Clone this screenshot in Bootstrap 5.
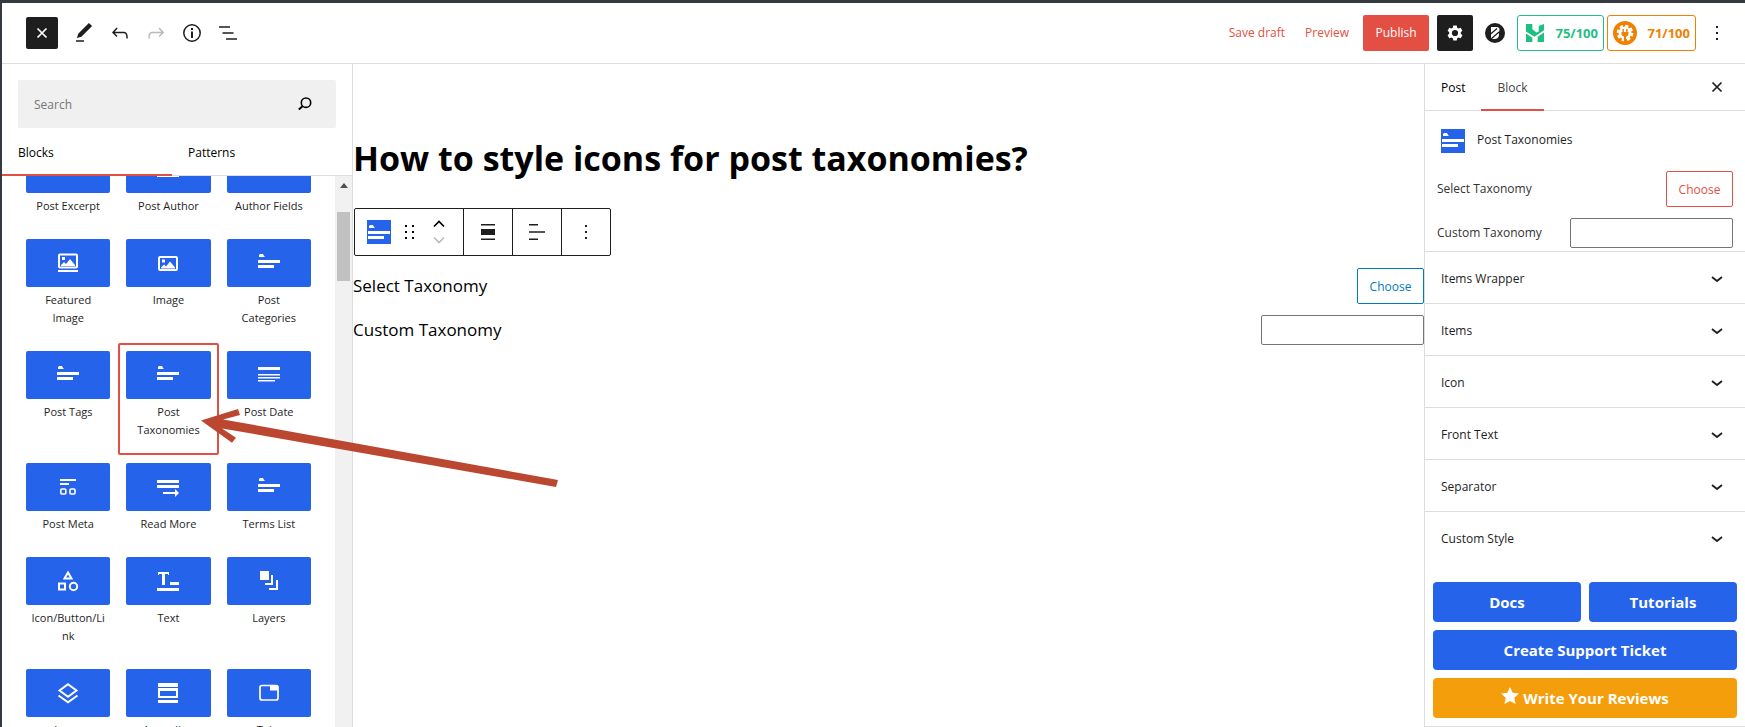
<!DOCTYPE html>
<html lang="en">
<head>
<meta charset="utf-8">
<meta name="viewport" content="width=device-width, initial-scale=1">
<title>Edit Post</title>
<link href="https://cdn.jsdelivr.net/npm/bootstrap@5.3.0/dist/css/bootstrap.min.css" rel="stylesheet">
<style>
:root { --line: #ddd; --ink: #1e1e1e; --accent: #e34f43; --tile: #2563eb; }
body { font-family: "Open Sans", "Noto Sans", sans-serif; font-size: 12px; line-height: 18px; color: var(--ink); background: #fff; }
button { font-family: inherit; }
.editor { height: 100vh; border-top: 3px solid #343a40; border-left: 2px solid #343a40; }
.topbar { height: 61px; border-bottom: 1px solid var(--line); padding: 0 10px 0 24px; }
.tool { width: 36px; height: 36px; border: 0; background: none; padding: 0; display: flex; align-items: center; justify-content: center; color: var(--ink); }
.tool-close { width: 32px; height: 32px; background: var(--ink); color: #fff; border-radius: 2px; }
.tool-gear { background: var(--ink); color: #fff; border-radius: 2px; }
.tool:disabled { opacity: .3; }
.txt-btn { border: 0; background: none; color: var(--accent); height: 36px; padding: 0 10px; }
.btn-publish { background: var(--accent); color: #fff; height: 36px; width: 66px; border: 0; border-radius: 2px; padding: 0; }
.scores { gap: 3px; margin-right: 3px; }
.score { height: 36px; border: 1px solid; border-radius: 3px; background: #fff; font-weight: 700; font-size: 13px; padding: 0 5px; white-space: nowrap; }
.score-green { color: #1fbf84; width: 87px; }
.score-orange { color: #f08000; width: 89px; }
.work-area { min-height: 0; }
.inserter { width: 351px; border-right: 1px solid var(--line); flex: none; }
.search-box { margin: 16px 16px 0; height: 48px; background: #f0f0f0; border-radius: 2px; padding: 0 24px 0 16px; }
.search-box input { border: 0; background: none; outline: 0; font-size: 12px; color: var(--ink); padding: 2px 0 0; }
.search-box input::placeholder { color: #757575; opacity: 1; }
.ins-tabs { height: 48px; border-bottom: 1px solid var(--line); padding-right: 10px; }
.ins-tabs button { border: 0; background: none; width: 50%; height: 48px; text-align: left; padding: 2px 16px 0; font-weight: 500; }
.ins-tabs button.active { border-bottom: 2px solid var(--accent); padding-top: 4px; }
.scroll-area { min-height: 0; overflow: hidden; }
.tiles { display: grid; grid-template-columns: repeat(3, 1fr); align-items: stretch; align-content: start; flex: 1; padding: 0 16px; margin-top: -39px; }
.tile { border: 0; background: none; padding: 8px; font-size: 11px; line-height: 18px; color: var(--ink); border-radius: 2px; display: flex; flex-direction: column; }
.tile.active { box-shadow: inset 0 0 0 2px var(--accent); }
.tile-pic { height: 48px; width: 100%; background: var(--tile); color: #fff; border-radius: 2px; display: flex; align-items: center; justify-content: center; }
.tile-name { padding: 4px 4px 8px; width: 100%; overflow-wrap: anywhere; }
.scrollbar-col { width: 17px; background: #f1f1f1; flex: none; padding: 7px 2px 0; }
.scrollbar-thumb { height: 69px; background: #c1c1c1; margin-top: 24px; }
.canvas { min-width: 0; color: #000; padding-top: 68px; }
.canvas h1 { font-size: 34px; line-height: 52px; font-weight: 700; margin: 0 0 24px; }
.block-bar { height: 48px; border: 1px solid var(--ink); border-radius: 2px; margin: 0 0 12px 1px; }
.block-bar > div, .block-bar > button { border: 0; background: none; padding: 0; height: 46px; width: 49px; display: flex; align-items: center; justify-content: center; color: var(--ink); }
.block-bar > * + * { border-left: 1px solid var(--ink) !important; }
.block-bar > div.bar-first { width: 108px; justify-content: flex-start; padding-left: 12px; gap: 14px; }
.bar-first button { border: 0; background: none; padding: 0; display: flex; }
.field-row { min-height: 36px; }
.canvas .field-row { font-size: 17px; line-height: 24px; }
.field-row + .field-row { margin-top: 8px; }
.btn-choose { height: 36px; width: 67px; border: 1px solid; border-radius: 2px; background: #fff; font-size: 12px; padding: 2px 0 0; }
.blue { color: #007cba; }
.red { color: var(--accent); }
.tax-input { height: 30px; width: 163px; border: 1px solid #757575; border-radius: 2px; padding: 0 8px; background: #fff; font-size: 13px; }
.settings { width: 321px; border-left: 1px solid var(--line); flex: none; }
.set-tabs { height: 47px; border-bottom: 1px solid var(--line); padding-right: 10px; }
.set-tabs .tab { border: 0; background: none; height: 47px; padding: 0 16px; font-weight: 500; }
.set-tabs .tab.active { border-bottom: 2px solid var(--accent); padding-top: 2px; color: #444; }
.set-head { padding: 18px 16px; gap: 12px; font-weight: 500; line-height: 22px; }
.set-fields { padding: 0 12px; border-bottom: 1px solid var(--line); color: #333; }
.panel-row { height: 52px; border: 0; border-bottom: 1px solid var(--line); background: none; padding: 2px 16px 0; font-weight: 500; color: var(--ink); }
.panel-row:last-child { border-bottom-color: transparent; }
.help { padding: 18px 8px 8px; gap: 8px; display: grid; grid-template-columns: 1fr 1fr; border-bottom: 1px solid var(--line); }
.help a { height: 40px; border-radius: 4px; background: var(--tile); color: #fff; font-weight: 700; font-size: 15px; text-decoration: none; display: flex; align-items: center; justify-content: center; gap: 4px; }
.help .wide { grid-column: 1 / -1; }
.help .review { background: #f59e0b; }
.pointer { position: absolute; left: 198px; top: 401px; pointer-events: none; }
</style>
</head>
<body>
<svg width="0" height="0" class="position-absolute" aria-hidden="true">
  <symbol id="i-terms" viewBox="0 0 24 24"><path fill="currentColor" d="M1 9h22v3H1zM1 14h16v3H1zM2 4l1-1h3l1 2 1 1H2z"/></symbol>
  <symbol id="i-dots" viewBox="0 0 24 24"><path fill="currentColor" d="M11 5h2v2h-2zM11 11h2v2h-2zM11 17h2v2h-2z"/></symbol>
  <symbol id="i-down" viewBox="0 0 24 24"><path fill="none" stroke="currentColor" stroke-width="1.8" d="M7 10l5 4 5-4"/></symbol>
  <symbol id="i-x" viewBox="0 0 24 24"><path fill="none" stroke="currentColor" stroke-width="1.7" d="M7.5 7.5l9 9m0-9l-9 9"/></symbol>
</svg>
<div class="editor d-flex flex-column overflow-hidden position-relative">
  <header class="topbar d-flex align-items-center justify-content-between flex-shrink-0">
    <div class="d-flex align-items-center">
      <button class="tool tool-close me-2" aria-label="Close inserter"><svg width="24" height="24"><use href="#i-x"/></svg></button>
      <button class="tool" aria-label="Tools"><svg width="24" height="24" viewBox="0 0 24 24"><path fill="currentColor" d="M20.1 5.1L16.9 2 6.2 12.7l-1.3 4.4 4.5-1.3L20.1 5.1zM4 19.2h8v1.6H4z"/></svg></button>
      <button class="tool" aria-label="Undo"><svg width="24" height="24" viewBox="0 0 24 24"><path fill="currentColor" d="M18.3 11.7c-.6-.6-1.4-.9-2.3-.9H6.7l2.9-3.3-1.1-1-4.5 5L8.500 16l1-1-2.700-2.700H16c.5 0 .9.2 1.300.5 1 1 1 3.400 1 4.500v.3h1.500v-.2c0-1.500 0-4.300-1.500-5.700z"/></svg></button>
      <button class="tool" aria-label="Redo" disabled><svg width="24" height="24" viewBox="0 0 24 24"><path fill="currentColor" d="M15.600 6.500l-1.100 1 2.900 3.300H8c-.9 0-1.700.3-2.300.9-1.400 1.500-1.400 4.200-1.400 5.600v.2h1.500v-.3c0-1.100 0-3.500 1-4.500.3-.3.7-.5 1.300-.5h9.200L14.500 15l1.100 1.100 4.600-4.600-4.600-5z"/></svg></button>
      <button class="tool" aria-label="Details"><svg width="24" height="24" viewBox="0 0 24 24"><circle cx="12" cy="12" r="8.200" fill="none" stroke="currentColor" stroke-width="1.500"/><path fill="currentColor" d="M11 7h2v2h-2zM11 10.500h2V17h-2z"/></svg></button>
      <button class="tool" aria-label="List view"><svg width="24" height="24" viewBox="0 0 24 24"><path fill="currentColor" d="M3 5.200h11v1.600H3zM6.500 11.200h11v1.600h-11zM10 17.200h11v1.600H10z"/></svg></button>
    </div>
    <div class="d-flex align-items-center">
      <button class="txt-btn">Save draft</button>
      <button class="txt-btn me-1">Preview</button>
      <button class="btn-publish me-2">Publish</button>
      <button class="tool tool-gear" aria-label="Settings"><svg width="24" height="24" viewBox="0 0 24 24"><path fill="currentColor" fill-rule="evenodd" d="M10.300 4.500h3.400l.5 2.200 1.300.8 2.200-.7 1.700 2.900-1.600 1.500v1.600l1.600 1.500-1.700 2.900-2.200-.7-1.300.8-.5 2.200h-3.400l-.5-2.200-1.300-.8-2.200.7-1.700-2.900 1.600-1.500v-1.600L4.600 9.700l1.700-2.900 2.200.7 1.300-.8zM12 8.900a3.100 3.100 0 100 6.200 3.100 3.100 0 000-6.200z"/></svg></button>
      <button class="tool mx-1" aria-label="Builder"><svg width="20" height="20" viewBox="0 0 20 20"><circle cx="10" cy="10" r="10" fill="currentColor"/><path fill="#fff" d="M6 4h6c2.500 0 3.500 3 1.500 5.500 1.500 3-.5 6.500-3.500 6.500H6z"/><path stroke="#1e1e1e" stroke-width="1.200" d="M5 11.500l7-6M6 16l8-7"/></svg></button>
      <div class="scores d-flex">
        <button class="score score-green d-flex align-items-center justify-content-between ps-2"><svg width="18" height="18" viewBox="0 0 17 17"><path fill="currentColor" d="M0 0h6v5l4 3 2-1V2l5-2v6L8 12 0 7zM0 9l6 4v4H0zM11 12l6-4v9h-6z"/></svg>75/100</button>
        <button class="score score-orange d-flex align-items-center justify-content-between"><svg width="24" height="24" viewBox="0 0 24 24"><circle cx="12" cy="12" r="12" fill="currentColor"/><circle cx="12" cy="12" r="6.500" fill="#fff"/><circle cx="12" cy="12" r="7" fill="none" stroke="#fff" stroke-width="2.600" stroke-dasharray="3.200 2.298"/><path fill="currentColor" d="M8.500 11h7v1.500c0 1.800-.9 2.700-2.500 3V22h-2v-6.500c-1.600-.3-2.500-1.200-2.500-3zM9.500 8h1.400v3H9.500zM13.100 8h1.400v3h-1.400z"/></svg>71/100</button>
      </div>
      <button class="tool" aria-label="Options"><svg width="24" height="24"><use href="#i-dots"/></svg></button>
    </div>
  </header>

  <div class="work-area d-flex flex-grow-1">
    <aside class="inserter d-flex flex-column">
      <div class="search-box d-flex align-items-center flex-shrink-0">
        <input type="search" class="flex-grow-1" placeholder="Search" aria-label="Search">
        <svg width="14" height="14" viewBox="0 0 14 14" fill="none" stroke="#000"><circle cx="8" cy="5.700" r="4.700" stroke-width="1.600"/><path stroke-width="2" d="M4.500 9.200L.8 12.500"/></svg>
      </div>
      <div class="ins-tabs d-flex flex-shrink-0"><button class="active">Blocks</button><button>Patterns</button></div>
      <div class="scroll-area d-flex flex-grow-1">
        <div class="tiles">
          <button class="tile"><span class="tile-pic"></span><span class="tile-name">Post Excerpt</span></button>
          <button class="tile"><span class="tile-pic"><svg width="22" height="22" viewBox="0 0 22 22"><path fill="currentColor" d="M1 4h20v4H1zM0 17h22v2H0z"/></svg></span><span class="tile-name">Post Author</span></button>
          <button class="tile"><span class="tile-pic"></span><span class="tile-name">Author Fields</span></button>

          <button class="tile"><span class="tile-pic"><svg width="22" height="22" viewBox="0 0 22 22"><rect x="2" y="2.500" width="18" height="13" rx="1" fill="none" stroke="currentColor" stroke-width="2"/><path fill="currentColor" d="M4 13l3-3 2 2 4-5 5 6v1H4zM5 5h3v3H5zM1 18h20v2H1z"/></svg></span><span class="tile-name">Featured Image</span></button>
          <button class="tile"><span class="tile-pic"><svg width="22" height="22" viewBox="0 0 22 22"><rect x="2" y="5" width="18" height="13" rx="1" fill="none" stroke="currentColor" stroke-width="2"/><path fill="currentColor" d="M4 15.500l3-3 2 2 4-5 5 6v1H4zM5 7.500h3v3H5z"/></svg></span><span class="tile-name">Image</span></button>
          <button class="tile"><span class="tile-pic"><svg width="24" height="24"><use href="#i-terms"/></svg></span><span class="tile-name">Post Categories</span></button>

          <button class="tile"><span class="tile-pic"><svg width="24" height="24"><use href="#i-terms"/></svg></span><span class="tile-name">Post Tags</span></button>
          <button class="tile active"><span class="tile-pic"><svg width="24" height="24"><use href="#i-terms"/></svg></span><span class="tile-name">Post Taxonomies</span></button>
          <button class="tile"><span class="tile-pic"><svg width="22" height="22" viewBox="0 0 22 22"><path fill="currentColor" d="M0 3h22v3H0zM0 10h22v1.500H0zM0 13h22v1.500H0zM0 16h17v1.500H0z"/></svg></span><span class="tile-name">Post Date</span></button>

          <button class="tile"><span class="tile-pic"><svg width="18" height="18" viewBox="0 0 18 18"><path fill="currentColor" d="M1 1h16v2H1zM1 5h9v2H1z"/><g fill="none" stroke="currentColor" stroke-width="1.600"><rect x="1.800" y="11" width="5" height="5" rx="1"/><rect x="11" y="11" width="5" height="5" rx="1"/></g></svg></span><span class="tile-name">Post Meta</span></button>
          <button class="tile"><span class="tile-pic"><svg width="22" height="22" viewBox="0 0 22 22"><path fill="currentColor" d="M0 4h22v3H0zM0 9h22v3H0zM6 16h12v-3l4 4-4 4v-3H6z"/></svg></span><span class="tile-name">Read More</span></button>
          <button class="tile"><span class="tile-pic"><svg width="24" height="24"><use href="#i-terms"/></svg></span><span class="tile-name">Terms List</span></button>

          <button class="tile"><span class="tile-pic"><svg width="22" height="22" viewBox="0 0 22 22" fill="none" stroke="currentColor" stroke-width="2"><path d="M11 2.500L14.500 8.500h-7zM2 13.500h6v6H2z"/><circle cx="16.500" cy="16.500" r="3.700"/></svg></span><span class="tile-name">Icon/Button/Link</span></button>
          <button class="tile"><span class="tile-pic"><svg width="22" height="22" viewBox="0 0 22 22"><path fill="currentColor" d="M1 2h11v3h-1V4H8v11H5V4H2v1H1zM13 12h9v3h-9zM0 18h22v3H0z"/></svg></span><span class="tile-name">Text</span></button>
          <button class="tile"><span class="tile-pic"><svg width="22" height="22" viewBox="0 0 22 22"><path fill="currentColor" d="M2 1h9v9H2zM13 5h2v10H7v-2h6zM18 10h2v10h-9v-2h7z"/></svg></span><span class="tile-name">Layers</span></button>

          <button class="tile"><span class="tile-pic"><svg width="22" height="22" viewBox="0 0 22 22" fill="none" stroke="currentColor" stroke-width="2"><path d="M11 2.200L19.500 8.500 11 14.800 2.500 8.500zM1.500 13.500L11 20.300l9.500-6.800"/></svg></span><span class="tile-name">Layer</span></button>
          <button class="tile"><span class="tile-pic"><svg width="22" height="22" viewBox="0 0 22 22"><path fill="currentColor" fill-rule="evenodd" d="M1 1h20v4H1zM1 6h20v10H1zM3 9v5h16V9zM1 18h20v3H1z"/></svg></span><span class="tile-name">Accordion</span></button>
          <button class="tile"><span class="tile-pic"><svg width="22" height="22" viewBox="0 0 22 22"><rect x="2" y="3.500" width="18" height="14.500" rx="2" fill="none" stroke="currentColor" stroke-width="1.700"/><path fill="currentColor" d="M12 3h8v5.500h-8z"/></svg></span><span class="tile-name">Tabs</span></button>
        </div>
        <div class="scrollbar-col"><svg class="d-block mx-auto" width="8" height="5"><path fill="#505050" d="M0 5l4-5 4 5z"/></svg><div class="scrollbar-thumb"></div></div>
      </div>
    </aside>

    <main class="canvas flex-grow-1">
      <h1>How to style icons for post taxonomies?</h1>
      <div class="block-bar d-inline-flex">
        <div class="bar-first">
          <button aria-label="Post Taxonomies"><svg width="24" height="24"><rect width="24" height="24" fill="#2563eb"/><use href="#i-terms" color="#fff" y="2"/></svg></button>
          <button aria-label="Drag"><svg width="10" height="14" viewBox="0 0 10 14"><path fill="currentColor" d="M0 0h2v2H0zM7 0h2v2H7zM0 6h2v2H0zM7 6h2v2H7zM0 12h2v2H0zM7 12h2v2H7z"/></svg></button>
          <span class="d-flex flex-column gap-2 ms-1"><button aria-label="Move up"><svg width="12" height="8" viewBox="0 0 12 8"><path d="M1 6.500l5-5 5 5" fill="none" stroke="currentColor" stroke-width="1.700"/></svg></button><button aria-label="Move down"><svg width="12" height="8" viewBox="0 0 12 8"><path d="M1 1.500l5 5 5-5" fill="none" stroke="#bbb" stroke-width="1.700"/></svg></button></span>
        </div>
        <button aria-label="Align"><svg width="14" height="16" viewBox="0 0 14 16"><path fill="currentColor" d="M0 0h14v1.500H0zM0 5h14v6H0zM0 14.500h14V16H0z"/></svg></button>
        <button aria-label="Align text"><svg width="16" height="16" viewBox="0 0 16 16"><path fill="currentColor" d="M0 0h9v1.500H0zM0 7.200h16v1.600H0zM0 14.500h9V16H0z"/></svg></button>
        <button aria-label="More"><svg width="24" height="24"><use href="#i-dots"/></svg></button>
      </div>
      <div class="field-row d-flex align-items-center justify-content-between"><span>Select Taxonomy</span><button class="btn-choose blue">Choose</button></div>
      <div class="field-row d-flex align-items-center justify-content-between"><label for="tax-canvas">Custom Taxonomy</label><input id="tax-canvas" type="text" class="tax-input"></div>
    </main>

    <aside class="settings d-flex flex-column">
      <div class="set-tabs d-flex align-items-start"><button class="tab">Post</button><button class="tab active">Block</button><button class="tool ms-auto align-self-center" aria-label="Close settings"><svg width="24" height="24"><use href="#i-x"/></svg></button></div>
      <div class="set-head d-flex"><svg width="24" height="24" class="flex-shrink-0"><rect width="24" height="24" fill="#2563eb"/><use href="#i-terms" color="#fff" y="1"/></svg><span>Post Taxonomies</span></div>
      <div class="set-fields">
        <div class="field-row d-flex align-items-center justify-content-between"><span>Select Taxonomy</span><button class="btn-choose red">Choose</button></div>
        <div class="field-row d-flex align-items-center justify-content-between"><label for="tax-side">Custom Taxonomy</label><input id="tax-side" type="text" class="tax-input"></div>
      </div>
      <div class="d-flex flex-column">
        <button class="panel-row d-flex align-items-center justify-content-between">Items Wrapper<svg width="24" height="24"><use href="#i-down"/></svg></button>
        <button class="panel-row d-flex align-items-center justify-content-between">Items<svg width="24" height="24"><use href="#i-down"/></svg></button>
        <button class="panel-row d-flex align-items-center justify-content-between">Icon<svg width="24" height="24"><use href="#i-down"/></svg></button>
        <button class="panel-row d-flex align-items-center justify-content-between">Front Text<svg width="24" height="24"><use href="#i-down"/></svg></button>
        <button class="panel-row d-flex align-items-center justify-content-between">Separator<svg width="24" height="24"><use href="#i-down"/></svg></button>
        <button class="panel-row d-flex align-items-center justify-content-between">Custom Style<svg width="24" height="24"><use href="#i-down"/></svg></button>
      </div>
      <div class="help">
        <a href="#">Docs</a><a href="#">Tutorials</a>
        <a href="#" class="wide">Create Support Ticket</a>
        <a href="#" class="wide review"><svg width="18" height="18" viewBox="0 0 18 18" class="mb-1"><path fill="currentColor" d="M9 0l2.700 5.800 6.300.7-4.700 4.300L14.600 17 9 13.900 3.400 17l1.300-6.200L0 6.500l6.300-.7z"/></svg>Write Your Reviews</a>
      </div>
    </aside>
  </div>
  <svg class="pointer" width="364" height="90" viewBox="0 0 364 90" aria-hidden="true"><path fill="#bb4730" d="M1 16.500L38 5l2 6-17 4.400L358 76l-2 7L22 24.400l14 9.300-4 5z"/></svg>
</div>
<script src="https://cdn.jsdelivr.net/npm/bootstrap@5.3.0/dist/js/bootstrap.bundle.min.js"></script>
</body>
</html>
